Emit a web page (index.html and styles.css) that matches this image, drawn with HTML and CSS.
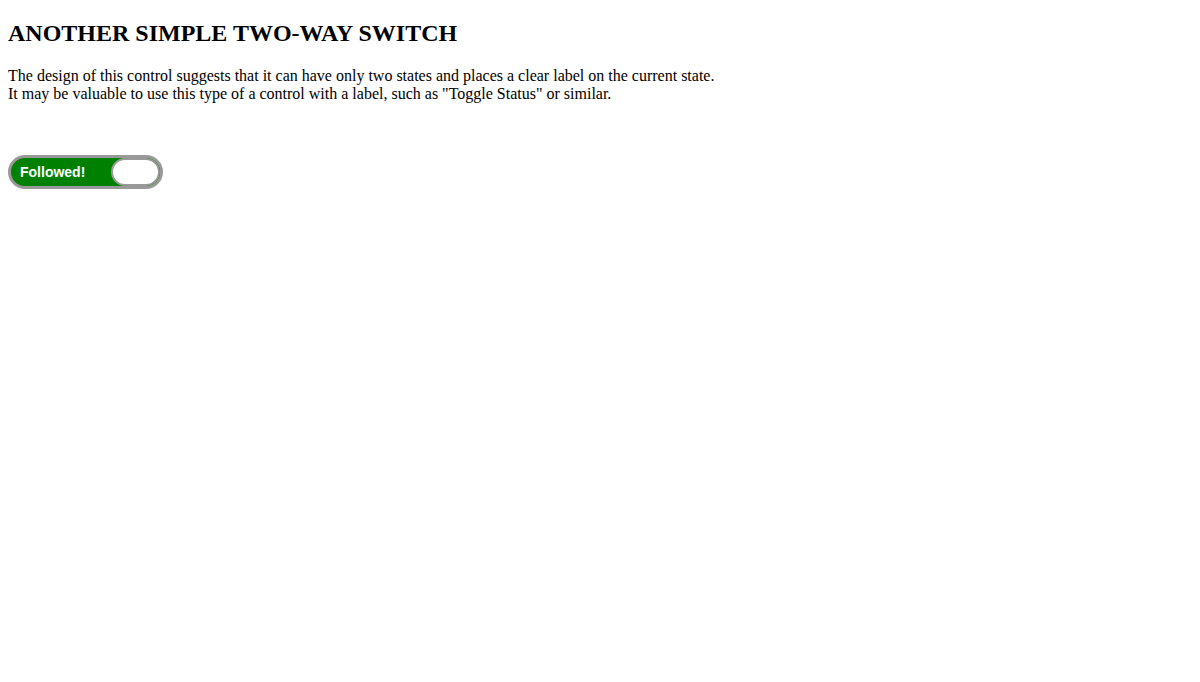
FILE: index.html
```html
<!DOCTYPE html>
<html lang="en">
<head>
    <meta charset="UTF-8">
    <meta name="viewport" content="width=device-width, initial-scale=1.0">
    <title>Another Simple Two-Way Switch</title>
    <link rel="stylesheet" href="styles.css">
</head>
<body>
    <h2>ANOTHER SIMPLE TWO-WAY SWITCH</h2>
    <p>
        The design of this control suggests that it can have only two states and places a clear label on the current state.<br>
        It may be valuable to use this type of a control with a label, such as "Toggle Status" or similar.
    </p>

    <div class="switch-wrap">
        <button class="switch on" type="button" role="switch" aria-checked="true">
            <span class="switch-label">Followed!</span>
            <span class="switch-knob"></span>
        </button>
    </div>
</body>
</html>
```

FILE: styles.css
```css
body {
    margin: 8px;
    font-family: 'Liberation Serif', 'Times New Roman', serif;
    font-size: 16px;
    color: #000;
    background: #fff;
}

h2 {
    font-size: 24px;
    font-weight: bold;
    margin: 12px 0 19.92px;
}

p {
    margin: 16px 0;
}

.switch-wrap {
    margin-top: 52px;
}

.switch {
    display: flex;
    align-items: center;
    width: 155px;
    height: 34px;
    padding: 0;
    box-sizing: border-box;
    border: 3px solid #999;
    border-radius: 17px;
    background: #008000;
    overflow: hidden;
    cursor: pointer;
    font-family: 'Liberation Sans', Arial, sans-serif;
}

.switch-label {
    padding-left: 9px;
    font-size: 14px;
    font-weight: bold;
    color: #fff;
}

.switch-knob {
    margin-left: auto;
    width: 49px;
    height: 28px;
    box-sizing: border-box;
    border: 2px solid #999;
    border-radius: 14px;
    background: #fff;
}
```
